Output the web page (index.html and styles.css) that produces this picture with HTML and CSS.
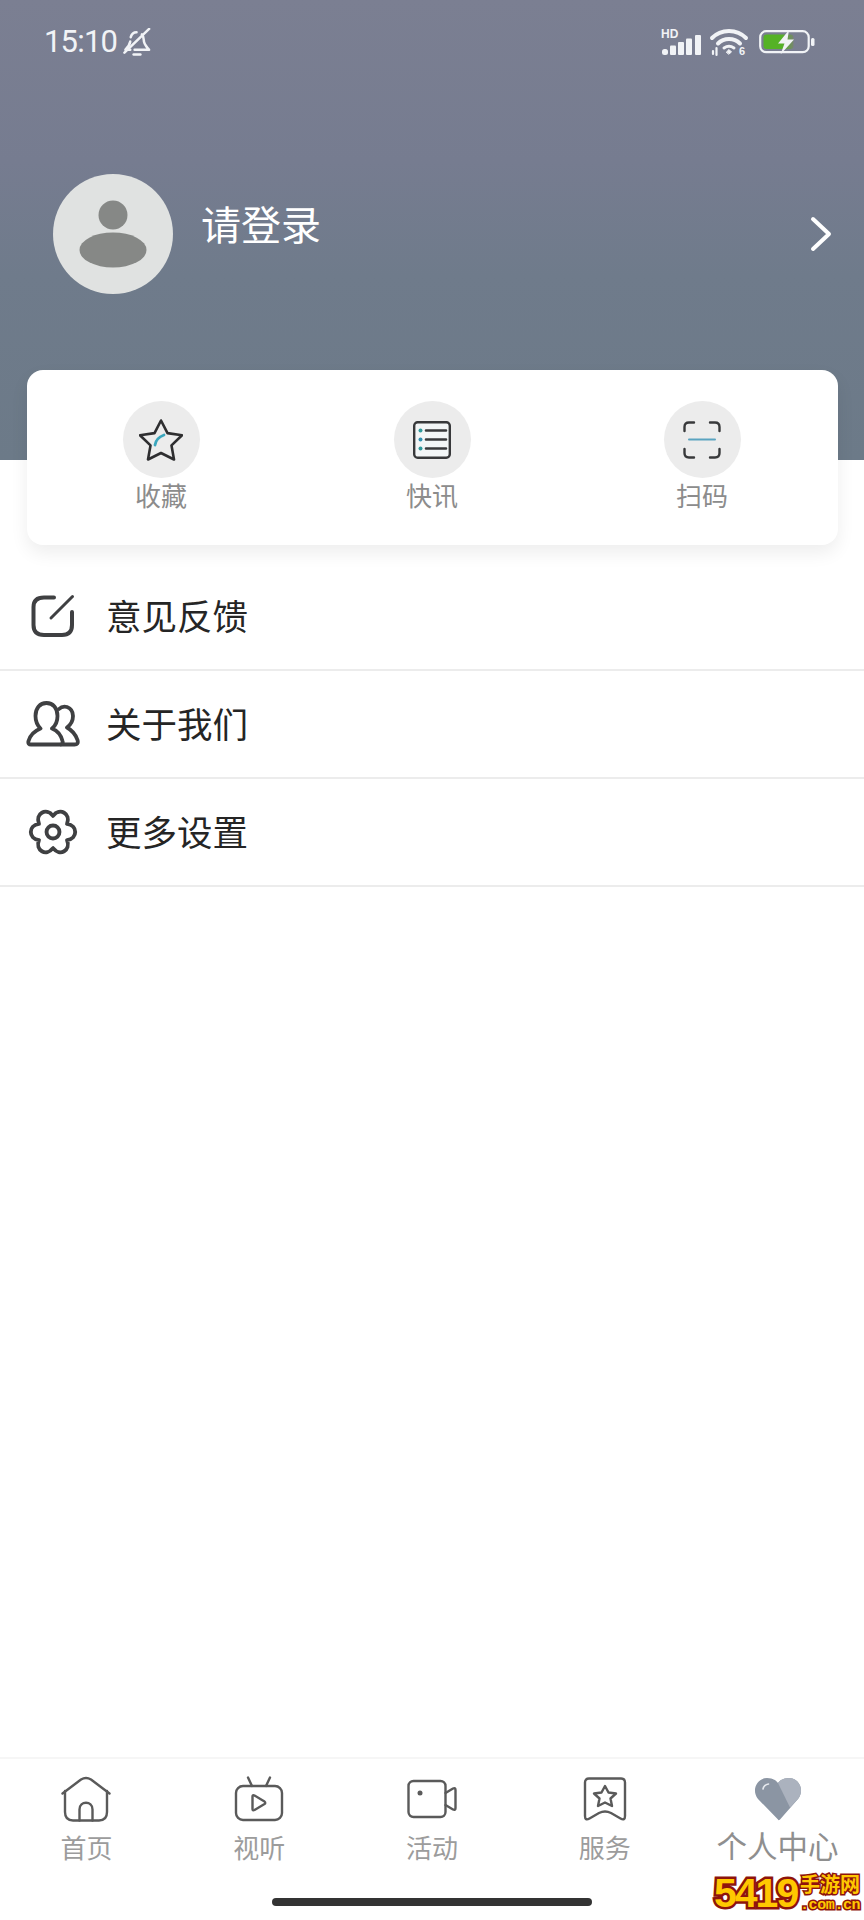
FILE: index.html
```html
<!DOCTYPE html>
<html lang="zh-CN">
<head>
<meta charset="utf-8">
<title>个人中心</title>
<link rel="stylesheet" href="styles.css">
</head>
<body>
<div class="page">
  <header class="hero">
    <div class="status">
      <span class="clock">15:10</span>
      <svg class="bell" viewBox="0 0 30 30" fill="none" stroke="#f1f3f6" stroke-width="2.600" stroke-linecap="round" stroke-linejoin="round">
        <path d="M8 9.500C9 6 11.500 4.500 14 4.500M19.500 6.500C21 8 21.500 10 21.500 12.500C21.500 17 24 19 27 22.500H12M7.500 22.500H2.500C5 20 7 17.500 7.500 14"/>
        <path d="M1.500 25.500L27 1"/>
        <path d="M11 27.500H18"/>
      </svg>
      <div class="status-right">
        <div class="signal">
          <span class="hd">HD</span>
          <svg class="bars" viewBox="0 0 39 20" fill="#f1f3f6">
            <rect x="0" y="14" width="6" height="6" rx="2.500"/><rect x="8" y="10.500" width="6" height="9.500" rx="1"/><rect x="16" y="7" width="6" height="13" rx="1"/><rect x="24" y="3.500" width="6" height="16.500" rx="1"/><rect x="33" y="0" width="6" height="20" rx="1"/>
          </svg>
        </div>
        <svg class="wifi" viewBox="0 0 38 28" fill="none" stroke="#f1f3f6" stroke-linecap="round">
          <path d="M2 10C11 0.500 27 0.500 36 10" stroke-width="4"/>
          <path d="M8 15.500C14 9.500 24 9.500 30 15.500" stroke-width="4"/>
          <path d="M14 20C17 18 21 18 24 20" stroke-width="3"/>
          <path d="M16.500 24L19 21.500L21.500 24L19 26Z" fill="#f1f3f6" stroke-width="1"/>
          <path d="M3 26V23M6.500 27V20" stroke-width="2.200"/>
          <text x="29" y="27" class="wifi-six">6</text>
        </svg>
        <svg class="battery" viewBox="0 0 56 24" fill="none">
          <defs>
            <linearGradient id="charge" x1="0" y1="0" x2="1" y2="0">
              <stop offset="0" stop-color="#55b226"/>
              <stop offset="0.6" stop-color="#55b226"/>
              <stop offset="1" stop-color="#77866f"/>
            </linearGradient>
          </defs>
          <rect x="1.200" y="1.200" width="48.500" height="21" rx="6" stroke="#f1f3f6" stroke-width="2.200"/>
          <rect x="4.500" y="4.500" width="30" height="14.500" rx="3" fill="url(#charge)"/>
          <rect x="52" y="8" width="3.500" height="8" rx="1.500" fill="#f1f3f6"/>
          <path d="M30 0L19 13.500H25.500L21.500 24.500L35 9.500H28.500Z" fill="#f1f3f6"/>
        </svg>
      </div>
    </div>
    <div class="profile">
      <div class="avatar">
        <svg class="avatar-icon" viewBox="0 0 68 68" fill="#868886">
          <circle cx="34" cy="15" r="14.500"/>
          <ellipse cx="34" cy="50" rx="33.500" ry="17.500"/>
        </svg>
      </div>
      <span class="login">请登录</span>
      <svg class="chevron" viewBox="0 0 24 36" fill="none" stroke="#fff" stroke-width="4" stroke-linecap="round" stroke-linejoin="round">
        <path d="M4 3L20 18L4 33"/>
      </svg>
    </div>
  </header>

  <section class="card">
    <div class="quick">
      <div class="quick-circle">
        <svg class="star-icon" viewBox="0 0 44 42" fill="none" stroke-linecap="round" stroke-linejoin="round">
          <path d="M22 1.500L28.500 14.100L43 16.200L32.500 26.400L35 40.500L22 34L9 40.500L11.500 26.400L1 16.200L15.500 14.100Z" stroke="#2e2e30" stroke-width="2.600"/>
          <path d="M16 26Q17 19 25 16" stroke="#3aa6bd" stroke-width="2.800"/>
        </svg>
      </div>
      <span class="quick-label">收藏</span>
    </div>
    <div class="quick">
      <div class="quick-circle">
        <svg class="list-icon" viewBox="0 0 38 38" fill="none" stroke-linecap="round">
          <rect x="1.200" y="1.200" width="35.600" height="35.600" rx="3.500" stroke="#38393b" stroke-width="2.400" fill="#f3f6f7"/>
          <path d="M13 9.500H33M13 18.500H33M13 27.500H33" stroke="#38393b" stroke-width="2.600"/>
          <circle cx="7.500" cy="9.500" r="2" fill="#2f9a9c"/>
          <circle cx="7.500" cy="18.500" r="2" fill="#2f8fb0"/>
          <circle cx="7.500" cy="27.500" r="2" fill="#2f9a9c"/>
        </svg>
      </div>
      <span class="quick-label">快讯</span>
    </div>
    <div class="quick">
      <div class="quick-circle">
        <svg class="scan-icon" viewBox="0 0 38 38" fill="none" stroke="#38393b" stroke-width="2.400" stroke-linecap="round">
          <path d="M1.500 10V6Q1.500 1.500 6 1.500H11M27 1.500H32Q36.500 1.500 36.500 6V10M1.500 28V32Q1.500 36.500 6 36.500H11M27 36.500H32Q36.500 36.500 36.500 32V28"/>
          <path d="M6 18.500H32" stroke="#5aa3c0" stroke-width="2"/>
        </svg>
      </div>
      <span class="quick-label">扫码</span>
    </div>
  </section>

  <nav class="menu">
    <div class="menu-row">
      <span class="menu-slot">
        <svg class="edit-icon" viewBox="0 0 44 44" fill="none" stroke="#3f4042" stroke-width="4" stroke-linecap="round" stroke-linejoin="round">
          <path d="M23 3.500H13Q2.500 3.500 2.500 13V31Q2.500 41 13 41H31Q41 41 41 31V18"/>
          <path d="M20 24L41.500 2.500" stroke-width="3"/>
        </svg>
      </span>
      <span class="menu-text">意见反馈</span>
    </div>
    <div class="menu-row">
      <span class="menu-slot">
        <svg class="people-icon" viewBox="0 0 54 46" fill="none" stroke="#3f4042" stroke-width="3.800" stroke-linecap="round" stroke-linejoin="round">
          <path d="M5 43.500H34.500Q37.500 43.500 36.500 40C35 34 31 29.500 26 27.500C30.500 24 31.500 20 31.500 15C31.500 7 27 2 20.500 2C14 2 9.500 7 9.500 15C9.500 20 11 24 14.500 27.500C8.500 30 4 34.500 2.500 40C1.800 42.500 3 43.500 5 43.500Z"/>
          <path d="M33 8C36 5 39 5.500 41 6C45 7.500 47 11 47 15C47 20 45 23.500 41 26.500C45.500 29 49.500 33 51.500 39C52.500 42.500 51 43.500 48.500 43.500H35"/>
        </svg>
      </span>
      <span class="menu-text">关于我们</span>
    </div>
    <div class="menu-row">
      <span class="menu-slot">
        <svg class="gear-icon" viewBox="-2 -2 54 52" fill="none" stroke="#3f4042" stroke-width="4.200" stroke-linecap="round" stroke-linejoin="round">
          <path d="M25 6.500C32.400 -2.900 44.600 4.100 40.200 15.250C52 17 52 31 40.200 32.750C44.600 43.900 32.400 50.900 25 41.500C17.600 50.900 5.400 43.900 9.800 32.750C-2 31 -2 17 9.800 15.250C5.400 4.100 17.600 -2.900 25 6.500Z"/>
          <circle cx="25" cy="24" r="7"/>
        </svg>
      </span>
      <span class="menu-text">更多设置</span>
    </div>
  </nav>

  <footer class="tabs">
    <div class="tab-row">
      <div class="tab">
        <svg class="tab-icon" viewBox="0 0 50 46" fill="none" stroke="#5a5a5a" stroke-width="2.400" stroke-linecap="round" stroke-linejoin="round">
          <path d="M1.500 17.500L20 3.500Q25 0.500 30 3.500L48.500 17.500"/>
          <path d="M4 15V36Q4 44.500 12 44.500H38Q46 44.500 46 36V15"/>
          <path d="M18.500 44.500V33.500C18.500 24.500 31.500 24.500 31.500 33.500V44.500"/>
        </svg>
        <span class="tab-label">首页</span>
      </div>
      <div class="tab">
        <svg class="tab-icon" viewBox="0 0 50 46" fill="none" stroke="#5a5a5a" stroke-width="2.400" stroke-linecap="round" stroke-linejoin="round">
          <rect x="2" y="10" width="46" height="34" rx="7"/>
          <path d="M14 1.500L18 10M36 1.500L32 10"/>
          <path d="M18.500 20.500Q18.500 18.500 20.500 19.500L30.500 25.500Q32 27 30.500 28L20.500 34Q18.500 35 18.500 33Z"/>
        </svg>
        <span class="tab-label">视听</span>
      </div>
      <div class="tab">
        <svg class="tab-icon" viewBox="0 0 50 46" fill="none" stroke="#5a5a5a" stroke-width="2.400" stroke-linecap="round" stroke-linejoin="round">
          <rect x="1.500" y="5" width="37" height="36" rx="5"/>
          <path d="M38.500 17L46 12.500Q48.500 11.500 48.500 14V32Q48.500 34.500 46 33.500L38.500 29"/>
          <circle cx="13" cy="17" r="2.500" fill="#5a5a5a" stroke="none"/>
        </svg>
        <span class="tab-label">活动</span>
      </div>
      <div class="tab">
        <svg class="tab-icon" viewBox="0 0 50 46" fill="none" stroke="#5a5a5a" stroke-width="2.400" stroke-linecap="round" stroke-linejoin="round">
          <path d="M9 2.500H41Q45 2.500 45 6.500V40Q45 45 40.500 42.500L31 37Q25 34 19 37L9.500 42.500Q5 45 5 40V6.500Q5 2.500 9 2.500Z"/>
          <path d="M25 10L28.500 16.500L36 17.500L30.500 22.500L32 30L25 26.500L18 30L19.500 22.500L14 17.500L21.500 16.500Z"/>
        </svg>
        <span class="tab-label">服务</span>
      </div>
      <div class="tab tab-active">
        <svg class="tab-icon" viewBox="0 0 50 46" fill="none">
          <path d="M25 43.500L5 23C-2 14 4 2 14 2C19 2 23 4 25 7C27 4 31 2 36 2C46 2 52 14 45 23L27 43.500Q25.500 45 25 43.500Z" fill="#8b95a3"/>
          <path d="M25 7C27 4 31 2 36 2C46 2 52 14 45 23L37 31.500Z" fill="#abb2be"/>
          <path d="M10 13C10.500 10.500 12.500 8.500 15.500 8" stroke="#e6e9ee" stroke-width="1.600" stroke-linecap="round"/>
        </svg>
        <span class="tab-label tab-label-active">个人中心</span>
      </div>
    </div>
    <div class="home-bar"></div>
  </footer>

  <div class="watermark">
    <span class="wm-num">5419</span>
    <span class="wm-side">
      <span class="wm-cn">手游网</span>
      <span class="wm-dom">.com.cn</span>
    </span>
  </div>
</div>
</body>
</html>
```
FILE: styles.css
```css
* { box-sizing: border-box; }
html, body { margin: 0; padding: 0; }
body { font-family: "Noto Sans CJK SC", "Noto Sans", sans-serif; background: #fff; }
svg { display: block; }

.page {
  position: relative;
  width: 864px;
  height: 1920px;
  display: flex;
  flex-direction: column;
  background: #fff;
  overflow: hidden;
}

.hero {
  height: 460px;
  flex: none;
  padding: 24px 0 0;
  background: linear-gradient(180deg, #7b7f92 0%, #767c90 35%, #6f7b8b 60%, #6c7a88 100%);
}

.status {
  height: 36px;
  display: flex;
  align-items: center;
  padding: 0 49px 0 44px;
}
.clock {
  font-family: Roboto, sans-serif;
  font-size: 31px;
  line-height: 36px;
  letter-spacing: -0.800px;
  color: #f1f3f6;
}
.bell { width: 29px; height: 29px; margin-left: 6px; }
.status-right { margin-left: auto; display: flex; align-items: flex-end; gap: 8px; }
.signal { position: relative; width: 40px; height: 26px; }
.hd {
  position: absolute;
  left: 0;
  top: -2px;
  font-family: "Liberation Sans", sans-serif;
  font-weight: 700;
  font-size: 12px;
  line-height: 12px;
  color: #f1f3f6;
}
.bars { position: absolute; left: 1px; bottom: 0; width: 39px; height: 22px; }
.wifi { width: 40px; height: 28px; margin-right: 2px; overflow: visible; }
.wifi-six {
  font-family: "Liberation Sans", sans-serif;
  font-weight: 700;
  font-size: 11px;
  fill: #f1f3f6;
  stroke: none;
}
.battery { width: 56px; height: 24px; margin-bottom: 2px; }

.profile {
  display: flex;
  align-items: center;
  margin-top: 114px;
  padding: 0 31px 0 53px;
}
.avatar {
  width: 120px;
  height: 120px;
  border-radius: 50%;
  background: #e0e2e1;
  display: flex;
  align-items: center;
  justify-content: center;
}
.avatar-icon { width: 68px; height: 68px; }
.login {
  margin-left: 28px;
  margin-top: -23px;
  font-size: 40px;
  line-height: 56px;
  color: #fff;
}
.chevron { margin-left: auto; width: 24px; height: 36px; }

.card {
  flex: none;
  margin: -90px 26px 0 27px;
  height: 175px;
  position: relative;
  display: grid;
  grid-template-columns: 268px 274px 266px;
  background: #fff;
  border-radius: 16px;
  box-shadow: 0 8px 18px rgba(0, 0, 0, 0.07);
  padding: 31px 0 0;
}
.quick { display: flex; flex-direction: column; align-items: center; }
.quick-circle {
  width: 77px;
  height: 77px;
  border-radius: 50%;
  background: #ececec;
  display: flex;
  align-items: center;
  justify-content: center;
}
.star-icon { width: 44px; height: 42px; }
.list-icon { width: 38px; height: 38px; }
.scan-icon { width: 38px; height: 38px; }
.quick-label {
  margin-top: -1px;
  font-size: 26px;
  line-height: 36px;
  color: #8c8c8c;
}

.menu { margin-top: 18px; flex: none; }
.menu-row {
  height: 108px;
  display: flex;
  align-items: center;
  border-bottom: 2px solid #ececec;
}
.menu-slot {
  width: 106px;
  flex: none;
  display: flex;
  justify-content: center;
}
.edit-icon { width: 44px; height: 44px; }
.people-icon { width: 54px; height: 46px; }
.gear-icon { width: 50px; height: 48px; }
.menu-text {
  margin-bottom: 2px;
  font-size: 35.500px;
  line-height: 50px;
  color: #252525;
}

.tabs {
  margin-top: auto;
  flex: none;
  height: 163px;
  border-top: 2px solid #f6f6f6;
  display: flex;
  flex-direction: column;
}
.tab-row {
  display: grid;
  grid-template-columns: repeat(5, 1fr);
  padding: 17px 0 0;
}
.tab { display: flex; flex-direction: column; align-items: center; }
.tab-icon { width: 50px; height: 46px; }
.tab-label {
  margin-top: 7px;
  font-size: 26px;
  line-height: 36px;
  color: #9c9c9c;
}
.tab-label-active { margin-top: 2px; font-size: 30.500px; line-height: 42px; color: #8f8f8f; }
.home-bar {
  margin: auto auto 14px;
  width: 320px;
  height: 8px;
  border-radius: 4px;
  background: #333;
}

.watermark {
  position: absolute;
  right: 0;
  bottom: 0;
  width: 150px;
  height: 54px;
  display: flex;
  align-items: center;
  white-space: nowrap;
  color: #ffc800;
}
.wm-num {
  flex: none;
  width: 86px;
  font-family: "Liberation Sans", sans-serif;
  font-weight: 700;
  font-size: 41px;
  line-height: 54px;
  letter-spacing: -2px;
  -webkit-text-stroke: 5px #8e140c;
  paint-order: stroke fill;
}
.wm-side { flex: none; display: flex; flex-direction: column; width: 64px; }
.wm-cn {
  font-family: "Noto Sans CJK SC", sans-serif;
  font-weight: 700;
  font-size: 20px;
  line-height: 26px;
  -webkit-text-stroke: 3px #8e140c;
  paint-order: stroke fill;
}
.wm-dom {
  font-family: "Liberation Mono", monospace;
  font-weight: 700;
  font-size: 15px;
  line-height: 18px;
  letter-spacing: -0.400px;
  -webkit-text-stroke: 3px #8e140c;
  paint-order: stroke fill;
}
```
